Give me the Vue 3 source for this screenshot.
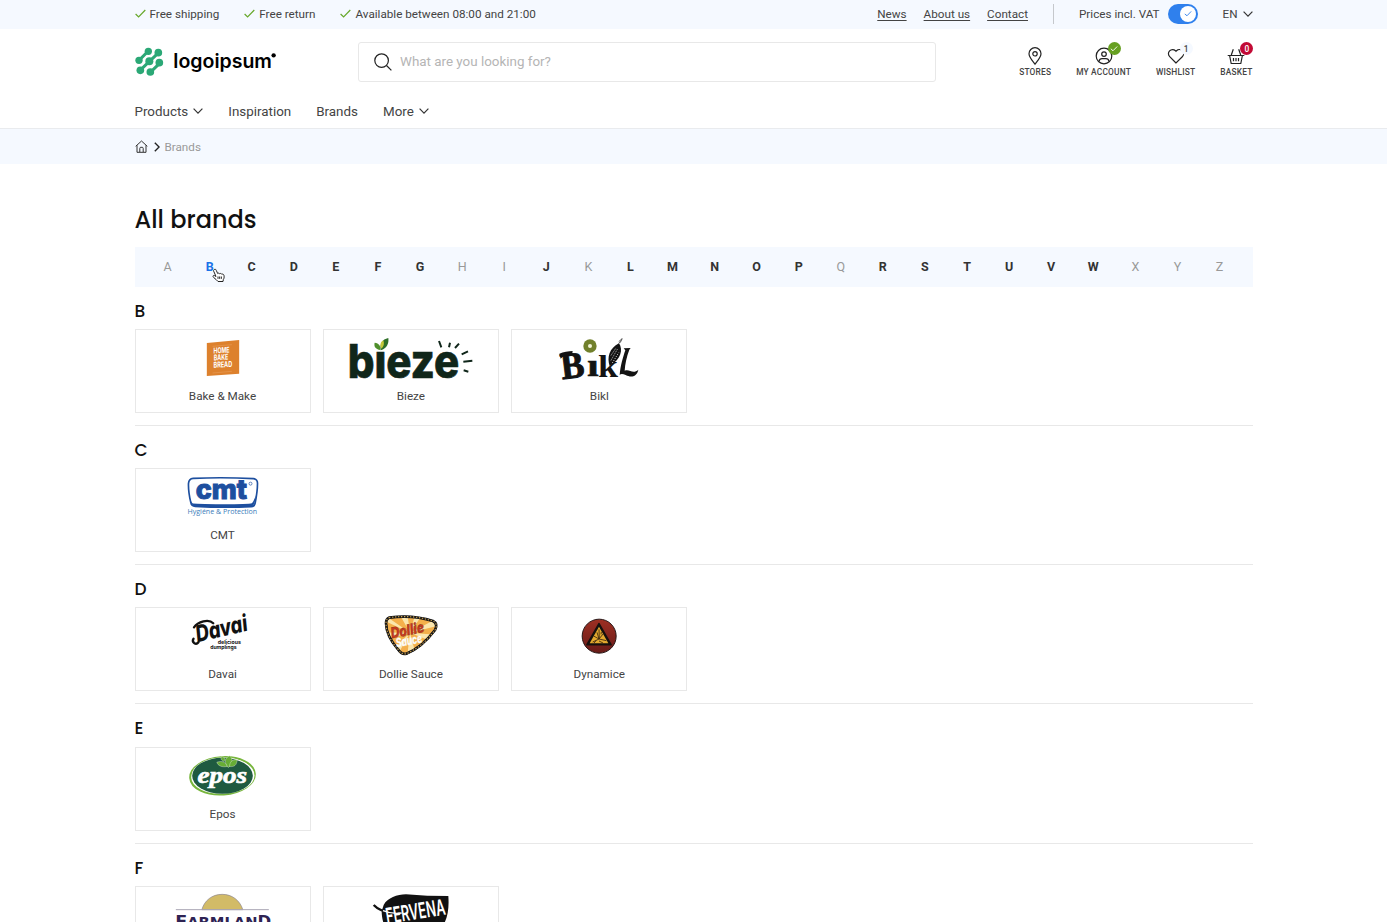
<template>
  <div class="page">
    <!-- top bar -->
    <div class="topbar">
      <div class="container topbar-inner">
        <ul class="usps">
          <li v-for="usp in usps" :key="usp">
            <svg class="check" viewBox="0 0 11 9"><path d="M.6 5 3.6 7.9 10.3 1" /></svg>
            <span>{{ usp }}</span>
          </li>
        </ul>
        <div class="topbar-right">
          <nav class="links">
            <a v-for="link in links" :key="link" href="#">{{ link }}</a>
          </nav>
          <span class="divider"></span>
          <span class="vat">Prices incl. VAT</span>
          <button class="toggle" :class="{ on: inclVat }" @click="inclVat = !inclVat">
            <span class="knob">
              <svg viewBox="0 0 11 9"><path d="M2 5 4.4 7 9 2.2" /></svg>
            </span>
          </button>
          <span class="lang">EN</span>
          <svg class="chevron" viewBox="0 0 10 6"><path d="M.6.7 5 5.1 9.4.7" /></svg>
        </div>
      </div>
    </div>

    <!-- header -->
    <header class="header">
      <div class="container header-row">
        <a class="logo" href="#">
          <svg viewBox="42 138 430 96">
            <g stroke="#2ba876" stroke-width="9" fill="#2ba876">
              <path d="M82 153 54 181M113 158 57 211M118 188 88 217" />
              <g stroke="none">
                <circle cx="82" cy="154" r="11" />
                <circle cx="112" cy="158" r="11.5" />
                <circle cx="54" cy="181" r="11" />
                <circle cx="85" cy="184" r="12" />
                <circle cx="115" cy="188" r="11.5" />
                <circle cx="58" cy="211" r="11.5" />
                <circle cx="88" cy="216" r="11.5" />
              </g>
            </g>
            <text x="157" y="205" font-size="59" font-weight="600" textLength="296" lengthAdjust="spacingAndGlyphs">logoipsum</text>
            <circle cx="458" cy="166" r="6.5" />
          </svg>
        </a>
        <label class="search">
          <svg viewBox="0 0 18 18"><circle cx="7.6" cy="7.6" r="6.8" /><path d="m12.5 12.5 4.9 4.9" /></svg>
          <input type="text" placeholder="What are you looking for?" />
        </label>
        <div class="tools">
          <a class="tool" href="#">
            <svg viewBox="0 0 20 20"><path d="M10 18.2C7.5 14.8 4 11.2 4 7.7a6 6 0 0 1 12 0c0 3.500-3.500 7.100-6 10.500Z" /><circle cx="10" cy="7.800" r="2.200" /></svg>
            <span>STORES</span>
          </a>
          <a class="tool" href="#">
            <svg viewBox="0 0 20 20"><circle cx="10" cy="10" r="7.800" /><circle cx="10" cy="8.100" r="2.300" /><path d="M5 15.500c.4-2 1.700-2.800 3-2.800h4c1.300 0 2.600.8 3 2.800" /></svg>
            <i class="badge green"><svg viewBox="0 0 11 9"><path d="M2 4.800 4.400 7 9 2.300" /></svg></i>
            <span>MY ACCOUNT</span>
          </a>
          <a class="tool" href="#">
            <svg viewBox="0 0 20 20"><path d="M10 17 3.700 10.700a4.100 4.100 0 0 1 5.800-6l.5.6.5-.6a4.100 4.100 0 0 1 5.800 6Z" /></svg>
            <i class="badge light">1</i>
            <span>WISHLIST</span>
          </a>
          <a class="tool" href="#">
            <svg viewBox="0 0 20 20"><path d="M1.700 9.500h16.600M3.600 9.500l1.600 8h9.600l1.600-8M5.300 9l2-5.700M14.700 9l-2-5.700M7.500 12v3.200M10 12v3.200M12.500 12v3.200" /></svg>
            <i class="badge red">0</i>
            <span>BASKET</span>
          </a>
        </div>
      </div>
      <nav class="container main-nav">
        <a v-for="item in menu" :key="item.label" href="#">
          {{ item.label }}
          <svg v-if="item.sub" class="chevron" viewBox="0 0 10 6"><path d="M.6.7 5 5.1 9.4.7" /></svg>
        </a>
      </nav>
    </header>

    <!-- breadcrumb -->
    <div class="breadcrumb">
      <div class="container crumbs">
        <svg class="home" viewBox="0 0 13 13"><path d="M.7 6.300 6.500 1l5.800 5.300M2 5.300v7h9v-7M4.800 12V8.300a1 1 0 0 1 1-1h1.400a1 1 0 0 1 1 1V12" /></svg>
        <svg class="sep" viewBox="0 0 6 10"><path d="m.8.700 4.300 4.300L.8 9.300" /></svg>
        <span>Brands</span>
      </div>
    </div>

    <main class="container">
      <h1>All brands</h1>

      <div class="alphabet">
        <a
          v-for="letter in alphabet"
          :key="letter"
          :class="{ disabled: disabled.includes(letter), active: letter === active }"
        >
          {{ letter }}
          <svg v-if="letter === active" class="cursor" viewBox="0 0 39 42">
            <path d="M7 3c3-2 5 0 6 3l4 9c2-2 5-1 6 1 2-2 5-1 6 1 3-1 6 0 7 4 1 6 0 9-2 12l-1 6H18c-3-5-8-7-13-12-4-4-1-7 2-6l5 3L5 8C4 6 5 4 7 3Z" />
            <path d="M18 24v7M23 24v7M28 24v7" />
          </svg>
        </a>
      </div>

      <section v-for="group in groups" :key="group.letter" class="group">
        <h2>{{ group.letter }}</h2>
        <div class="grid">
          <a v-for="brand in group.brands" :key="brand.name" class="card" href="#">
            <svg class="brand-logo" :viewBox="brand.box + ' 522 168'">
              <g v-if="brand.name === 'Bake & Make'">
                <path d="M49 39 146 30v101l-97 7Z" fill="#dd812d" />
                <path d="m66 49 58-5M66 129l58-5" stroke="#efb27b" stroke-width="1" />
                <g fill="#fff" font-size="24" font-weight="700" transform="skewY(-3)">
                  <text x="69" y="74" textLength="48" lengthAdjust="spacingAndGlyphs">HOME</text>
                  <text x="70" y="95" textLength="43" lengthAdjust="spacingAndGlyphs">BAKE</text>
                  <text x="69" y="117" textLength="56" lengthAdjust="spacingAndGlyphs">BREAD</text>
                </g>
              </g>

              <g v-else-if="brand.name === 'Bieze'" class="round">
                <text x="23" y="144" font-size="140" font-weight="800" fill="#10261a" stroke="#10261a" stroke-width="2" textLength="335" lengthAdjust="spacingAndGlyphs">bıeze</text>
                <path d="M121 60C106 57 101 49 104 38c13 2 18 9 17 22Z" fill="#4f8f2b" />
                <path d="M122 61c-3-19 4-33 23-37 2 17-4 31-23 37Z" fill="#2f7029" />
                <path d="M124 56c-5-10-3-20 6-25 4 10 1 19-6 25Z" fill="#c5c93b" />
                <path d="m297 33 7 19M330 38l-3 14M357 41l-12 13M384 64l-19 9M397 92l-27 3M385 125l-14-4" stroke="#10261a" stroke-width="6" />
              </g>

              <g v-else-if="brand.name === 'Bikl'" class="serif" fill="#131313">
                <text x="38" y="148" font-size="112" font-weight="700" stroke="#131313" stroke-width="3" textLength="70" lengthAdjust="spacingAndGlyphs" transform="rotate(-7 38 148)">B</text>
                <path d="M29 71c12-6 28-7 40-8l-2 12c-16-1-26 2-34 11Z" />
                <text x="113" y="137" font-size="94" font-weight="700" stroke="#131313" stroke-width="2" textLength="34" lengthAdjust="spacingAndGlyphs">ı</text>
                <text x="145" y="142" font-size="96" font-weight="700" textLength="60" lengthAdjust="spacingAndGlyphs">k</text>
                <path d="M180 108c-9-26-1-53 28-68 13 20 6 48-28 68Z" />
                <path d="M184 91 204 56M188 99l19-31M184 76l15-22" stroke="#fff" stroke-width="2.500" stroke-dasharray="3 4" />
                <path d="M207 41 218 26M212 38l5-12-10 9" stroke="#555" stroke-width="2.500" fill="none" />
                <path d="M222 55l21-1-4 5c-8 20-13 44-14 63 14-7 24 12 41-3-5 23-23 24-38 16-9-4-15-4-18 0 2-26 10-54 17-74Z" />
                <circle cx="121" cy="48" r="20" fill="#71802b" />
                <circle cx="121" cy="48" r="6" fill="#f3f4d8" />
              </g>

              <g v-else-if="brand.name === 'CMT'">
                <path d="M38 26Q130 22 219 27q12 1 12 14 0 25-7 59-2 11-12 11-84 4-168-1-11 0-13-11-8-34-7-58 1-14 14-15Z" fill="#fff" stroke="#1d4f9f" stroke-width="5" />
                <path d="M26 77q5 20 10 24 4 2 90 3 78 0 88-3 5-4 12-24-2 34-15 34-84 4-168-1-12 0-17-33Z" fill="#1d4f9f" />
                <text x="46" y="87" font-size="80" font-weight="800" fill="#1d4f9f" stroke="#1d4f9f" stroke-width="3" textLength="154" lengthAdjust="spacingAndGlyphs">cmt</text>
                <circle cx="210" cy="42" r="4.500" fill="none" stroke="#1d4f9f" stroke-width="2" />
                <text x="21" y="134" class="open" font-size="22" fill="#3b7cba" textLength="209" lengthAdjust="spacingAndGlyphs">Hygiéne &amp; Protection</text>
              </g>

              <g v-else-if="brand.name === 'Davai'" fill="#111">
                <g transform="rotate(-13 50 103)">
                  <text x="52" y="98" font-size="69" font-weight="800" font-style="italic" textLength="158" lengthAdjust="spacingAndGlyphs">Davai</text>
                  <path d="M52 52C67 38 101 36 111 53M55 99c-10 8-21-5-12-14" fill="none" stroke="#111" stroke-width="7" stroke-linecap="round" />
                </g>
                <g font-size="16" font-weight="700">
                  <text x="112" y="104" textLength="69" lengthAdjust="spacingAndGlyphs">delicious</text>
                  <text x="89" y="117" textLength="79" lengthAdjust="spacingAndGlyphs">dumplings</text>
                </g>
              </g>

              <g v-else-if="brand.name === 'Dollie Sauce'">
                <clipPath id="pick"><path d="M57 33Q127 20 188 42q14 8 4 24-39 51-83 69-12 5-22-10Q53 86 51 48q0-12 6-15Z" /></clipPath>
                <path d="M57 28Q127 17 190 38q18 10 7 31-40 53-87 72-16 4-28-13Q47 86 45 46q1-14 12-18Z" fill="#211e1e" />
                <g clip-path="url(#pick)">
                  <path d="M45 20h160v125H45Z" fill="#f4b04b" />
                  <path d="M120 75 40 38V20ZM120 75 80 5h30ZM120 75 140 5h28ZM120 75 210 28v25ZM120 75 205 82v28ZM120 75 140 150h-29ZM120 75 81 145 62 132ZM120 75 38 98V74Z" fill="#fbe6ad" />
                </g>
                <path d="M57 30Q127 20 189 40q16 9 6 27-40 53-86 71-14 4-25-13Q49 86 48 47q0-13 9-17Z" fill="none" stroke="#181717" stroke-width="8" />
                <path d="M57 30Q127 20 189 40q16 9 6 27-40 53-86 71-14 4-25-13Q49 86 48 47q0-13 9-17Z" fill="none" stroke="#c9a352" stroke-width="3.500" stroke-dasharray="4 5" />
                <text x="65" y="92" font-size="44" font-weight="800" font-style="italic" fill="#c83b20" stroke="#722518" stroke-width="1" textLength="101" lengthAdjust="spacingAndGlyphs" transform="rotate(-11 65 92)">Dollie</text>
                <text x="80" y="119" font-size="37" font-weight="700" font-style="italic" fill="#fff" stroke="#f7f4ea" stroke-width="1" textLength="80" lengthAdjust="spacingAndGlyphs" transform="rotate(-11 80 119)">Sauce</text>
              </g>

              <g v-else-if="brand.name === 'Dynamice'">
                <linearGradient id="dyn" x2="0" y2="1">
                  <stop offset="0" stop-color="#9e2f23" />
                  <stop offset="1" stop-color="#681b18" />
                </linearGradient>
                <circle cx="88.500" cy="85.500" r="51" fill="url(#dyn)" stroke="#261717" stroke-width="3" />
                <path d="m88 48 36 63H52Z" fill="#16110e" stroke="#16110e" stroke-width="5" stroke-linejoin="round" />
                <path d="m88 57 28 50H60Z" fill="#e3a92e" />
                <path d="m88 94-6-20M88 94l13-16M88 94 72 85M88 94l22 5M88 94l-19 9M89 93l-1-28M88 100l12 6M79 99l-6 7M94 80l1-7" stroke="#37230c" stroke-width="2.500" />
              </g>

              <g v-else-if="brand.name === 'Epos'">
                <ellipse cx="126" cy="91" rx="97" ry="56" fill="none" stroke="#78b63d" stroke-width="6" transform="rotate(-4 126 91)" />
                <ellipse cx="128" cy="90" rx="94" ry="54" fill="#fff" />
                <ellipse cx="126" cy="91" rx="91" ry="54" fill="#1f5a40" />
                <g fill="#67ad35" stroke="#fff" stroke-width="1">
                  <path d="M143 66c-13-14-11-29 5-35 11 12 9 26-5 35Z" />
                  <path d="M140 63c-18 3-28-3-31-13 17-5 27 0 31 13Z" />
                  <path d="M147 63c1-15 9-22 23-20-1 16-9 22-23 20Z" />
                  <path d="M131 48c-9-3-11-8-8-15 10 2 13 7 8 15Z" />
                </g>
                <text x="51" y="113" class="serif" font-size="72" font-weight="700" font-style="italic" fill="#fff" stroke="#fff" stroke-width="2" textLength="149" lengthAdjust="spacingAndGlyphs">epos</text>
              </g>

              <g v-else-if="brand.name === 'Farmland'">
                <path d="M229 178c8-28 31-46 61-46s53 18 62 46Z" fill="#d2bb67" stroke="#898391" stroke-width="2" />
                <path d="M151 178h279" stroke="#aaa7b5" stroke-width="3" />
                <g class="wide" fill="#2e2353" font-weight="700">
                  <text x="149" y="230" font-size="50" textLength="36" lengthAdjust="spacingAndGlyphs">F</text>
                  <text x="185" y="230" font-size="43" textLength="211" lengthAdjust="spacingAndGlyphs">ARMLAN</text>
                  <text x="396" y="230" font-size="50" textLength="41" lengthAdjust="spacingAndGlyphs">D</text>
                </g>
              </g>

              <g v-else>
                <path d="M776 164c12-22 40-31 67-32l64 4 63 1c4 53-8 91-39 113H790c-13-20-20-46-20-67Z" fill="#111" />
                <path d="M746 164c14 15 35 22 58 24" fill="none" stroke="#111" stroke-width="7" />
                <path d="M774 181c19 8 40 9 56 7" fill="none" stroke="#fff" stroke-width="4" />
                <text x="786" y="221" font-size="66" fill="#fff" font-weight="600" textLength="180" lengthAdjust="spacingAndGlyphs" transform="rotate(-9 786 221)">FERVENA</text>
              </g>
            </svg>
            <span>{{ brand.name }}</span>
          </a>
        </div>
      </section>
    </main>
  </div>
</template>

<script setup>
import { ref } from 'vue'

const inclVat = ref(true)
const active = ref('B')

const usps = ['Free shipping', 'Free return', 'Available between 08:00 and 21:00']
const links = ['News', 'About us', 'Contact']
const menu = [
  { label: 'Products', sub: true },
  { label: 'Inspiration' },
  { label: 'Brands' },
  { label: 'More', sub: true }
]

const alphabet = 'ABCDEFGHIJKLMNOPQRSTUVWXYZ'.split('')
const disabled = ['A', 'H', 'I', 'K', 'Q', 'X', 'Y', 'Z']

// box: origin of the logo artwork
const groups = [
  {
    letter: 'B',
    brands: [
      { name: 'Bake & Make', box: '-163.5 0' },
      { name: 'Bieze', box: '-48 0' },
      { name: 'Bikl', box: '-113 0' }
    ]
  },
  { letter: 'C', brands: [{ name: 'CMT', box: '-133.5 -2' }] },
  {
    letter: 'D',
    brands: [
      { name: 'Davai', box: '-133.5 -5' },
      { name: 'Dollie Sauce', box: '-138 1' },
      { name: 'Dynamice', box: '-173 1' }
    ]
  },
  { letter: 'E', brands: [{ name: 'Epos', box: '-133.5 7.5' }] },
  {
    letter: 'F',
    brands: [
      { name: 'Farmland', box: '31.5 110' },
      { name: 'Fervena', box: '597 110' }
    ]
  }
]
</script>

<style>
body {
  margin: 0;
  background: #fff;
}
</style>

<style scoped>
* {
  box-sizing: border-box;
}

.page {
  height: 100vh;
  overflow: hidden;
  font-family: Roboto, 'Liberation Sans', sans-serif;
  font-size: 11.7px;
  color: #444;
}

.container {
  width: 1118px;
  margin: 0 auto;
}

a {
  color: inherit;
  text-decoration: none;
}

svg {
  display: block;
  flex: none;
}

.topbar {
  height: 29px;
  background: #f5f9ff;
}

.topbar-inner {
  display: flex;
  justify-content: space-between;
  height: 27px;
}

.usps {
  display: flex;
  gap: 25px;
  margin: 0;
  padding: 0;
  list-style: none;
}

.usps li,
.topbar-right,
.links {
  display: flex;
  align-items: center;
}

.usps li {
  gap: 4px;
}

.check {
  width: 11px;
  height: 9px;
  fill: none;
  stroke: #67a82b;
  stroke-width: 1.2;
}

.links {
  gap: 17px;
}

.links a {
  text-decoration: underline;
  text-underline-offset: 2px;
}

.divider {
  width: 1px;
  height: 20px;
  margin: 0 25px;
  background: #c5c8cc;
}

.toggle {
  width: 30px;
  height: 20px;
  margin: 0 25px 0 8px;
  padding: 2px;
  border: 0;
  border-radius: 10px;
  background: #bbb;
}

.toggle.on {
  padding-left: 12px;
  background: #2f80ed;
}

.knob {
  display: flex;
  align-items: center;
  justify-content: center;
  width: 16px;
  height: 16px;
  border-radius: 50%;
  background: #fff;
}

.knob svg {
  width: 10px;
  height: 9px;
  fill: none;
  stroke: #2f80ed;
}

.chevron {
  width: 10px;
  height: 6px;
  margin-left: 5px;
  fill: none;
  stroke: #333;
  stroke-width: 1.2;
}

.header {
  height: 100px;
  border-bottom: 1px solid #e9ebee;
}

.header-row {
  display: flex;
  align-items: center;
  height: 65px;
}

.logo {
  width: 223.5px;
}

.logo svg {
  width: 143.3px;
  height: 32px;
  font-family: Inter, sans-serif;
}

.search {
  display: flex;
  align-items: center;
  width: 577.5px;
  height: 40px;
  padding-left: 15px;
  border: 1px solid #e8e8e8;
  border-radius: 3px;
}

.search svg {
  width: 18px;
  height: 18px;
  margin-right: 8px;
  fill: none;
  stroke: #222;
  stroke-width: 1.2;
}

.search input {
  flex: 1;
  padding: 0;
  border: 0;
  outline: 0;
  background: none;
  font: 13.4px Roboto, sans-serif;
}

.search input::placeholder {
  color: #b5b5b5;
}

.tools {
  display: flex;
  gap: 25px;
  margin-left: auto;
}

.tool {
  position: relative;
  display: flex;
  flex-direction: column;
  align-items: center;
  font-size: 8.35px;
  font-weight: 500;
  line-height: 10px;
  letter-spacing: 0.2px;
}

.tool > svg {
  width: 20px;
  height: 20px;
  margin-bottom: 1px;
  fill: none;
  stroke: #222;
  stroke-width: 1.2;
}

.badge {
  position: absolute;
  top: -4px;
  left: calc(50% + 4px);
  display: flex;
  align-items: center;
  justify-content: center;
  width: 13px;
  height: 13px;
  border-radius: 50%;
  font-style: normal;
  letter-spacing: 0;
}

.badge svg {
  width: 10px;
  height: 9px;
  fill: none;
  stroke: #fff;
}

.badge.green {
  background: #67a022;
}

.badge.light {
  background: #f5f9ff;
}

.badge.red {
  background: #c20a35;
  color: #fff;
}

.main-nav {
  display: flex;
  align-items: center;
  gap: 25px;
  height: 34px;
  font-size: 13.4px;
}

.main-nav a {
  display: flex;
  align-items: center;
}

.breadcrumb {
  height: 35px;
  background: #f5f9ff;
}

.crumbs {
  display: flex;
  align-items: center;
  height: 35px;
  color: #999;
}

.home {
  width: 13px;
  height: 13px;
  fill: none;
  stroke: #333;
}

.sep {
  width: 6px;
  height: 10px;
  margin: 0 5px 0 6px;
  fill: none;
  stroke: #222;
  stroke-width: 1.4;
}

h1 {
  height: 83px;
  margin: 0;
  padding-top: 41px;
  font: 500 24px/30px Poppins, Inter, sans-serif;
  color: #111;
}

.alphabet {
  display: flex;
  height: 40px;
  padding: 0 12px;
  background: #f5f9ff;
}

.alphabet a {
  position: relative;
  flex: 1;
  font-size: 12.5px;
  font-weight: 700;
  line-height: 40px;
  text-align: center;
  color: #333;
}

.alphabet .disabled {
  font-weight: 400;
  color: #999;
}

.alphabet .active {
  color: #1a73e8;
}

.cursor {
  position: absolute;
  top: 21px;
  left: 23px;
  width: 13px;
  height: 15px;
  fill: #fff;
  stroke: #222;
  stroke-width: 3;
}

.group {
  height: 139.15px;
  border-bottom: 1px solid #e8e8e8;
}

h2 {
  height: 42.2px;
  margin: 0;
  padding-top: 4px;
  font: 500 17px/40px Poppins, Inter, sans-serif;
  color: #111;
}

.grid {
  display: grid;
  grid-template-columns: repeat(6, 1fr);
  gap: 12.4px;
}

.card {
  height: 84px;
  border: 1px solid #e8e8e8;
  text-align: center;
}

.card span {
  display: block;
  line-height: 20px;
}

.brand-logo {
  width: 174px;
  height: 56px;
  font-family: Inter, sans-serif;
}

.serif {
  font-family: 'Liberation Serif', serif;
}

.open {
  font-family: 'Open Sans', sans-serif;
}

.wide {
  font-family: 'DejaVu Sans', sans-serif;
}
</style>
